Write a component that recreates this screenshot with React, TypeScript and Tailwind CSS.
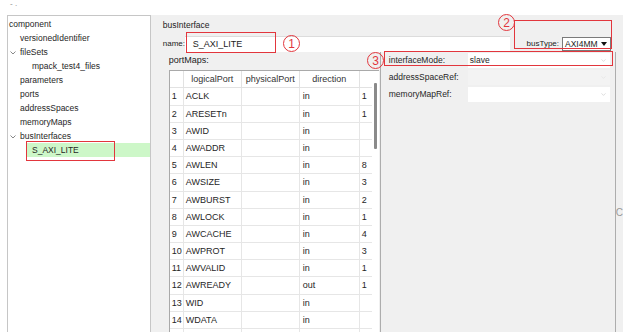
import { ChevronDown } from "lucide-react";

type TreeItem = { label: string; level: number; open?: boolean; selected?: boolean };

const treeItems: TreeItem[] = [
  { label: "component", level: 0 },
  { label: "versionedIdentifier", level: 1 },
  { label: "fileSets", level: 1, open: true },
  { label: "mpack_test4_files", level: 2 },
  { label: "parameters", level: 1 },
  { label: "ports", level: 1 },
  { label: "addressSpaces", level: 1 },
  { label: "memoryMaps", level: 1 },
  { label: "busInterfaces", level: 1, open: true },
  { label: "S_AXI_LITE", level: 2, selected: true },
];

const portRows: [number, string, string, string][] = [
  [1, "ACLK", "in", "1"],
  [2, "ARESETn", "in", "1"],
  [3, "AWID", "in", ""],
  [4, "AWADDR", "in", ""],
  [5, "AWLEN", "in", "8"],
  [6, "AWSIZE", "in", "3"],
  [7, "AWBURST", "in", "2"],
  [8, "AWLOCK", "in", "1"],
  [9, "AWCACHE", "in", "4"],
  [10, "AWPROT", "in", "3"],
  [11, "AWVALID", "in", "1"],
  [12, "AWREADY", "out", "1"],
  [13, "WID", "in", ""],
  [14, "WDATA", "in", ""],
];

const Marker = ({ n, className }: { n: number; className: string }) => (
  <div
    className={`absolute w-[17px] h-[17px] rounded-full border border-[#e2363d] text-[#e2363d] text-[12px] leading-none flex items-center justify-center ${className}`}
  >
    {n}
  </div>
);

const Caret = () => (
  <svg width="6" height="4" viewBox="0 0 6 4" className="absolute left-[2px] top-[6px]">
    <path d="M0.5 0.5 L3 3 L5.5 0.5" fill="none" stroke="#7a7a7a" strokeWidth="0.9" />
  </svg>
);

const Tree = () => (
  <div className="ml-[7px] w-[146px] h-full bg-white border-l border-t border-r border-[#c6c6c6] pt-px text-[8.5px] text-[#262626]">
    {treeItems.map((it) =>
      it.selected ? (
        <div key={it.label} className="relative h-[14px] ml-[18px] bg-[#cdf7c8] leading-[14px] pl-[6px]">
          {it.label}
          <div className="absolute left-0 -top-[2px] w-[89px] h-[20px] border border-[#e2363d]" />
        </div>
      ) : (
        <div
          key={it.label}
          className={`relative h-[14px] leading-[14px] ${
            it.level === 0 ? "pl-[1px]" : it.level === 1 ? "pl-[12px]" : "pl-[24px]"
          }`}
        >
          {it.open && <Caret />}
          {it.label}
        </div>
      ),
    )}
  </div>
);

const PortTable = () => (
  <div className="flex-1 flex bg-white border-l border-t border-[#a9a9a9] overflow-hidden">
    <div className="w-[202px] text-[9px] text-[#262626]">
      <div className="flex h-[17.4px] border-b border-[#e2e2e2] leading-[17px] text-[#333]">
        <div className="w-[14px] border-r border-[#e2e2e2]" />
        <div className="w-[58px] border-r border-[#e2e2e2] text-center">logicalPort</div>
        <div className="w-[58px] border-r border-[#e2e2e2] text-center">physicalPort</div>
        <div className="w-[60px] border-r border-[#e2e2e2] text-center">direction</div>
        <div className="w-[12px]" />
      </div>
      {portRows.map(([n, name, dir, w]) => (
        <div key={n} className="flex h-[17.2px] border-b border-[#e6e6e6] leading-[17px]">
          <div className="w-[14px] border-r border-[#e6e6e6] pl-[2px] whitespace-nowrap">{n}</div>
          <div className="w-[58px] border-r border-[#e6e6e6] pl-[2px] whitespace-nowrap">{name}</div>
          <div className="w-[58px] border-r border-[#e6e6e6]" />
          <div className="w-[60px] border-r border-[#e6e6e6] pl-[3px]">{dir}</div>
          <div className="w-[12px] pl-[2px]">{w}</div>
        </div>
      ))}
      <div className="flex h-[17.2px]">
        <div className="w-[14px] border-r border-[#e6e6e6]" />
        <div className="w-[58px] border-r border-[#e6e6e6]" />
        <div className="w-[58px] border-r border-[#e6e6e6]" />
        <div className="w-[60px] border-r border-[#e6e6e6]" />
      </div>
    </div>
    <div className="w-[7px] pt-[12px] pl-[2px]">
      <div className="w-[3px] h-[66px] bg-[#8a8a8a] rounded-[1px]" />
    </div>
  </div>
);

const FieldRow = ({
  label,
  value,
  disabled,
}: {
  label: string;
  value?: string;
  disabled?: boolean;
}) => (
  <div className="h-[17px] flex items-center">
    <div className="w-[87px] pl-[8px] text-[8.5px] text-[#262626] whitespace-nowrap">{label}</div>
    <div
      className={`flex-1 mr-[5px] h-[15px] flex items-center justify-between pl-[2px] pr-[3px] ${
        disabled ? "bg-[#f3f3f3]" : "bg-white"
      }`}
    >
      <span className="text-[8.5px] text-[#262626]">{value}</span>
      <ChevronDown size={7} strokeWidth={1.5} className={disabled ? "text-[#dadada]" : "text-[#b4b4b4]"} />
    </div>
  </div>
);

export default function App() {
  return (
    <div className="relative w-[623px] h-[332px] overflow-hidden bg-white font-['Liberation_Sans',Arial,sans-serif] text-[#222]">
      {/* top strip */}
      <div className="h-[15px] pl-[10px] text-[8px] leading-[8px] text-[#888]">- .</div>

      <div className="flex h-[317px]">
        <Tree />

        <div className="flex-1 h-full bg-[#f0f0f0] pl-[12px] flex flex-col">
          <div className="mt-[4px] h-[12px] leading-[12px] text-[8.5px]">busInterface</div>

          <div className="mt-[5px] h-[16px] flex items-center">
            <div className="w-[22px] text-[8px] whitespace-nowrap">name:</div>
            <div className="w-[325px] h-full bg-white border-t border-[#dcdcdc] pl-[8px] text-[9px] leading-[15px]">
              S_AXI_LITE
            </div>
            <div className="ml-auto mr-[12px] flex items-center">
              <span className="text-[8px] mr-[3px]">busType:</span>
              <div className="w-[49px] h-[14px] border border-[#7a7a7a] bg-white flex items-center justify-between pl-[2px] pr-[3px]">
                <span className="text-[8.5px]">AXI4MM</span>
                <svg width="6" height="4" viewBox="0 0 6 4">
                  <path d="M0 0 H6 L3 4 Z" fill="#111" />
                </svg>
              </div>
            </div>
          </div>

          <div className="flex flex-1 min-h-0">
            <div className="ml-[6px] w-[210px] flex flex-col">
              <div className="h-[18px] leading-[16px] text-[9px]">portMaps:</div>
              <PortTable />
            </div>
            <div className="ml-[1px] w-[236px] h-full border-l border-r border-[#adadad]">
              <FieldRow label="interfaceMode:" value="slave" />
              <FieldRow label="addressSpaceRef:" disabled />
              <FieldRow label="memoryMapRef:" />
            </div>
            <div className="pt-[156px] text-[10px] text-[#9a9a9a] leading-none">C</div>
          </div>
        </div>
      </div>

      {/* annotation overlays */}
      <div className="absolute left-[186px] top-[32px] w-[90px] h-[21px] border border-[#e2363d]" />
      <Marker n={1} className="left-[283px] top-[35px]" />
      <div className="absolute left-[514px] top-[20px] w-[98px] h-[29px] border border-[#e2363d]" />
      <Marker n={2} className="left-[498px] top-[14px]" />
      <div className="absolute left-[384px] top-[51px] w-[229px] h-[15px] border border-[#e2363d]" />
      <Marker n={3} className="left-[367px] top-[52px]" />
    </div>
  );
}
